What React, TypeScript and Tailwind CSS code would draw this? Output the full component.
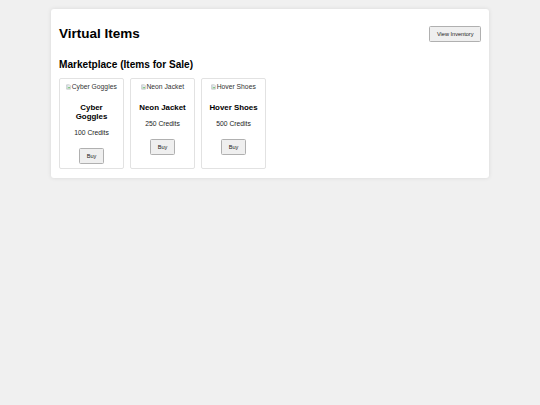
import React from "react"

const items = [
  { name: "Cyber Goggles", price: 100 },
  { name: "Neon Jacket", price: 250 },
  { name: "Hover Shoes", price: 500 },
]

function BrokenImage({ alt }: { alt: string }) {
  return (
    <span className="inline-flex items-center text-[6.75px] leading-[7.8px] text-[#333]">
      <svg width="5" height="6" viewBox="0 0 16 16" className="mr-[0.5px]">
        <path d="M2 1h9l3 3v11H2z" fill="#f4f4f4" stroke="#9aa0a6" strokeWidth="1.5" />
        <path d="M4 12l3-4 2 2 2-3 2 5z" fill="#4caf50" />
        <circle cx="6" cy="5" r="1.3" fill="#4a90d9" />
      </svg>
      {alt}
    </span>
  )
}

export default function App() {
  return (
    <div className="min-h-screen w-full bg-[#f0f0f0] pt-[9px]" style={{ fontFamily: '"Liberation Sans", Arial, sans-serif' }}>
      <div className="mx-auto w-[438px] rounded-[3px] bg-white p-[8px] pb-[9px] shadow-[0_0_4px_rgba(0,0,0,0.1)]">
        <div className="flex items-center justify-between">
          <h1 className="my-[9px] text-[13.5px] font-bold leading-[15.5px] text-black">Virtual Items</h1>
          <button className="rounded-[1.5px] border border-[#b0b0b0] bg-[#efefef] px-[6.5px] py-[4px] text-[5.6px] leading-[6.4px] text-[#222]">
            View Inventory
          </button>
        </div>

        <h2 className="mt-[8px] mb-[8px] text-[10.1px] font-bold leading-[11.6px] text-black">Marketplace (Items for Sale)</h2>

        <div className="flex gap-[6px]">
          {items.map((item) => (
            <div key={item.name} className="flex w-[65px] flex-col items-center rounded-[2px] border border-[#e2e2e2] px-[4px] pt-[4px] pb-[4px] text-center">
              <BrokenImage alt={item.name} />
              <h3 className="mt-[12.5px] text-[7.9px] font-bold leading-[9.1px] text-black">{item.name}</h3>
              <p className="mt-[7.5px] text-[6.75px] leading-[7.8px] text-[#222]">{item.price} Credits</p>
              <button className="mt-[11px] h-[16px] rounded-[1.5px] border border-[#b0b0b0] bg-[#efefef] px-[6.5px] text-[5.6px] leading-[6.4px] text-[#222]">
                Buy
              </button>
            </div>
          ))}
        </div>
      </div>
    </div>
  )
}
